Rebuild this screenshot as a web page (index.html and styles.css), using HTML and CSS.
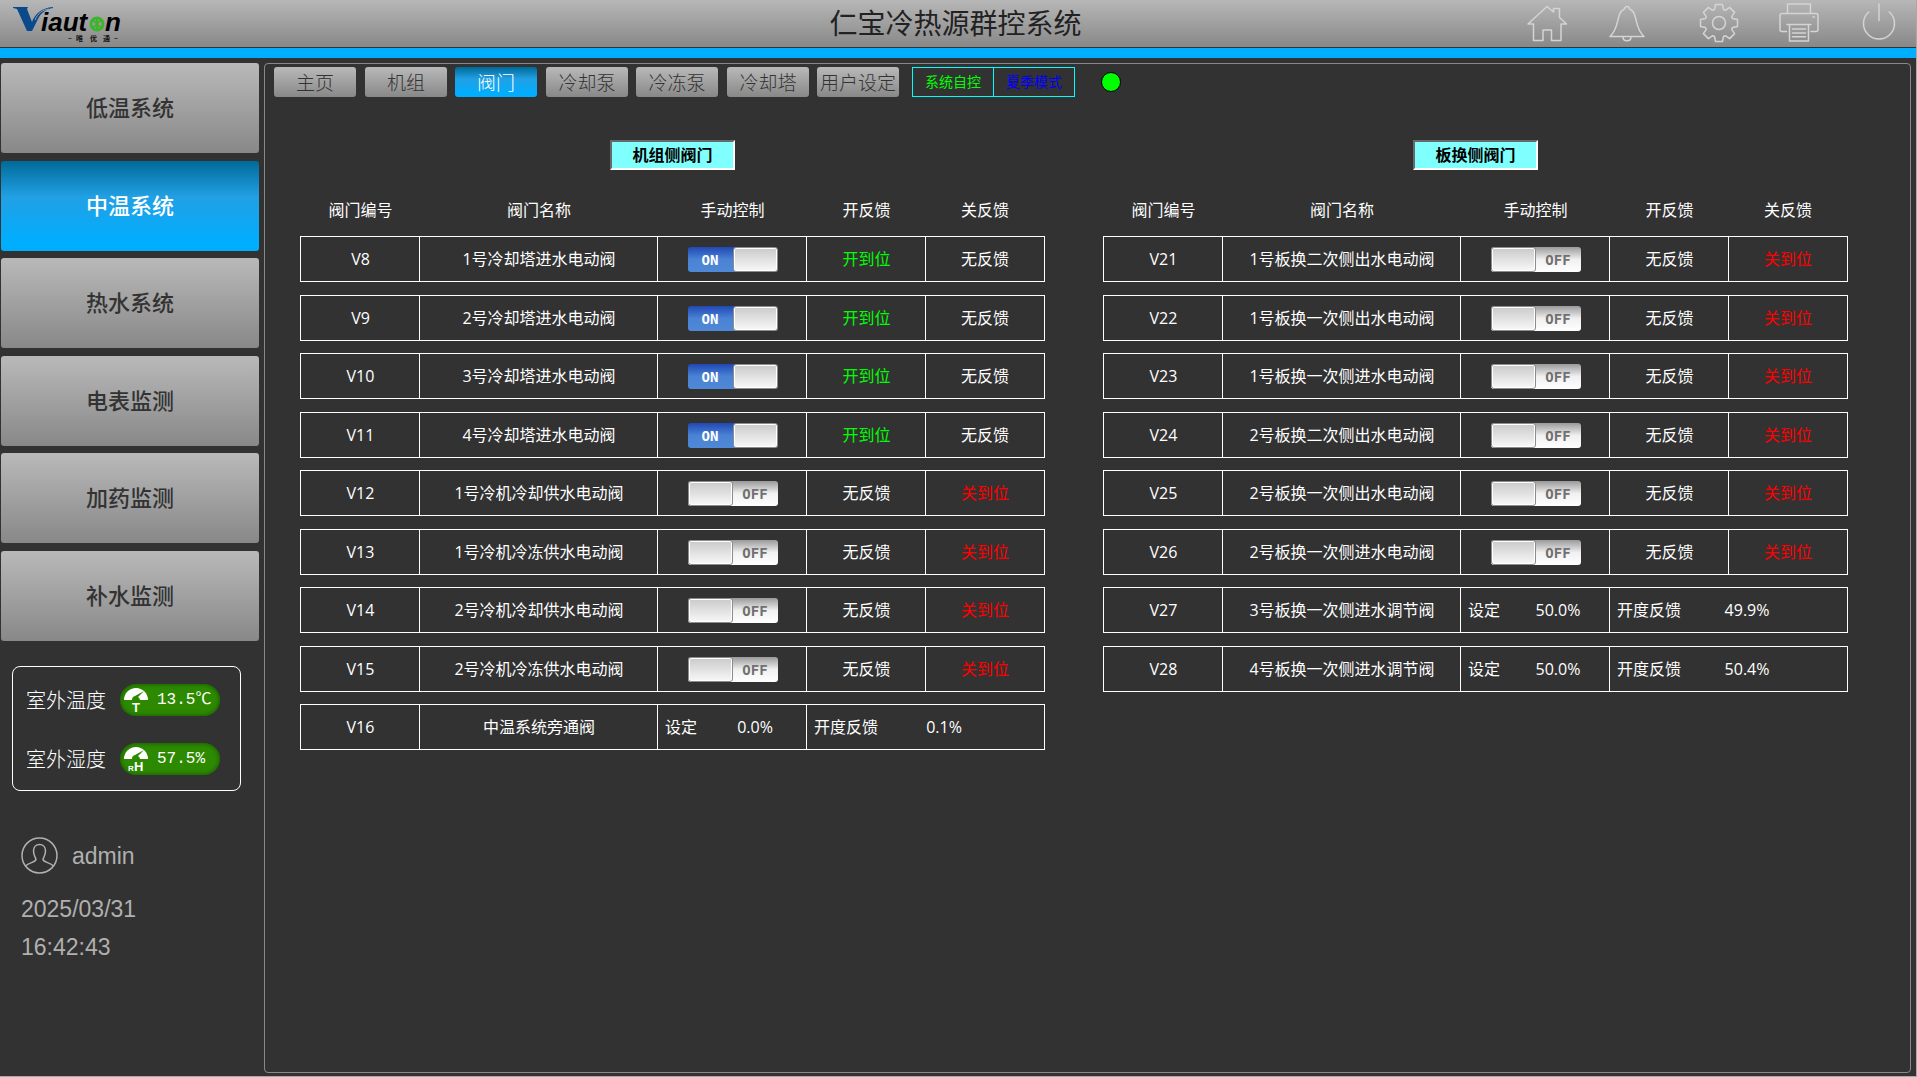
FILE: index.html
```html
<!DOCTYPE html>
<html lang="zh-CN">
<head>
<meta charset="utf-8">
<meta name="viewport" content="width=device-width, initial-scale=1">
<title>仁宝冷热源群控系统</title>
<link rel="stylesheet" href="styles.css">
</head>
<body>
<header class="topbar">
  <svg class="logo" width="112" height="44" viewBox="0 0 112 44" role="img" aria-label="Viauton">
    <path class="logo-blue" d="M1 7H16L15 9L20 22C23 14 29 8 41 7V8C34 9 28 14 26 19L20 31H15L5 9L1 8Z"/>
    <path class="logo-swoosh" d="M23 20C26 13 30 10 37 9"/>
    <text class="logo-word" x="29" y="31">iaut</text>
    <text class="logo-word" x="93" y="31">n</text>
    <circle class="logo-ring" cx="85" cy="24" r="6"/>
    <path class="logo-leaf" d="M81 20L89 28M89 20L81 28M85 18V30"/>
    <text class="logo-sub" x="56 64 78 91 102" y="41">–唯优通–</text>
  </svg>
  <h1 class="title">仁宝冷热源群控系统</h1>
  <nav class="tools" aria-label="工具">
    <button class="tool" type="button" aria-label="首页"><svg viewBox="0 0 40 40"><path d="M1 21L20 3.5L26.500 9V5.500H32.500V14.500L39.500 21H34V37.500H24.500V27H16V37.500H6.500V21Z"/></svg></button>
    <button class="tool" type="button" aria-label="报警"><svg viewBox="0 0 40 40"><path d="M3 33.500H37C30 27 30 19 28 13C27 9 25 7 22.500 6C22 2.500 18 2.500 17.500 6C15 7 13 9 12 13C10 19 10 27 3 33.500ZM16 34C16 39 24 39 24 34"/></svg></button>
    <button class="tool tool-gear" type="button" aria-label="设置"><svg viewBox="-20 -20 40 40"><path d="M-3.500-18.500H3.500L4.500-13.500L6.400-12.700L10.600-15.600L15.600-10.600L12.700-6.400L13.500-4.500L18.500-3.500V3.500L13.500 4.500L12.700 6.400L15.600 10.600L10.600 15.600L6.400 12.700L4.500 13.500L3.500 18.500H-3.500L-4.500 13.500L-6.400 12.700L-10.600 15.600L-15.600 10.600L-12.700 6.400L-13.500 4.500L-18.500 3.500V-3.500L-13.500-4.500L-12.700-6.400L-15.600-10.600L-10.600-15.600L-6.400-12.700L-4.500-13.500Z"/><circle r="6.500"/></svg></button>
    <button class="tool" type="button" aria-label="打印"><svg viewBox="0 0 40 40"><path d="M8.500 10.500V1H31.500V10.500M7.500 28.500H3Q1 28.500 1 26.500V12.500Q1 10.500 3 10.500H37Q39 10.500 39 12.500V26.500Q39 28.500 37 28.500H32M8 21.500H32M10.500 21.500V38H29.500V21.500M13.500 26H26.500M13.500 30H26.500M13.500 33.700H26.500M34 14H35.500"/></svg></button>
    <button class="tool" type="button" aria-label="退出"><svg viewBox="0 0 40 40"><path d="M20 1V17.500M9.700 9A15.500 15.500 0 1 0 30.300 9"/></svg></button>
  </nav>
</header>

<div class="layout">
  <aside class="sidebar">
    <nav class="systems" aria-label="系统">
      <button class="system" type="button">低温系统</button>
      <button class="system active" type="button">中温系统</button>
      <button class="system" type="button">热水系统</button>
      <button class="system" type="button">电表监测</button>
      <button class="system" type="button">加药监测</button>
      <button class="system" type="button">补水监测</button>
    </nav>
    <section class="weather">
      <div class="reading"><span>室外温度</span>
        <span class="pill"><svg width="26" height="32" viewBox="0 0 26 32"><path class="dome" d="M1 16A12 12 0 0 1 25 16H17A4 4 0 0 0 15 13L21 7L12 12A4 4 0 0 0 9 16Z"/><text class="unit" x="13" y="28" text-anchor="middle">T</text></svg><span>13.5℃</span></span>
      </div>
      <div class="reading"><span>室外湿度</span>
        <span class="pill"><svg width="26" height="32" viewBox="0 0 26 32"><path class="dome" d="M1 16A12 12 0 0 1 25 16H17A4 4 0 0 0 15 13L21 7L12 12A4 4 0 0 0 9 16Z"/><text class="unit-small" x="5" y="28">R</text><text class="unit" x="11" y="28">H</text></svg><span>57.5%</span></span>
      </div>
    </section>
    <section class="session">
      <div class="user"><svg width="37" height="37" viewBox="0 0 37 37" aria-hidden="true"><circle cx="18.500" cy="18.500" r="17.500"/><path d="M4.500 29C8 25 14 26 15 22.500C15 21 12.500 19 12.500 14C12.500 10 15 7.500 18.500 7.500C22 7.500 24.500 10 24.500 14C24.500 19 22 21 22 22.500C23 26 29 25 32.500 29"/></svg><span>admin</span></div>
      <div class="clock"><time>2025/03/31</time><time>16:42:43</time></div>
    </section>
  </aside>

  <main class="panel">
    <div class="toolbar">
      <nav class="tabs" aria-label="页面">
        <button class="tab" type="button">主页</button>
        <button class="tab" type="button">机组</button>
        <button class="tab active" type="button">阀门</button>
        <button class="tab" type="button">冷却泵</button>
        <button class="tab" type="button">冷冻泵</button>
        <button class="tab" type="button">冷却塔</button>
        <button class="tab" type="button">用户设定</button>
      </nav>
      <div class="modes"><span class="mode auto">系统自控</span><span class="mode season">夏季模式</span></div>
      <span class="lamp" role="img" aria-label="运行"></span>
    </div>

    <div class="groups">
      <section class="group">
        <h2 class="caption">机组侧阀门</h2>
        <table class="valves">
          <thead><tr><th>阀门编号</th><th>阀门名称</th><th>手动控制</th><th>开反馈</th><th>关反馈</th></tr></thead>
          <tbody>
            <tr><td>V8</td><td>1号冷却塔进水电动阀</td><td><label class="switch"><input type="checkbox" checked><span>ON</span></label></td><td class="opened">开到位</td><td>无反馈</td></tr>
            <tr><td>V9</td><td>2号冷却塔进水电动阀</td><td><label class="switch"><input type="checkbox" checked><span>ON</span></label></td><td class="opened">开到位</td><td>无反馈</td></tr>
            <tr><td>V10</td><td>3号冷却塔进水电动阀</td><td><label class="switch"><input type="checkbox" checked><span>ON</span></label></td><td class="opened">开到位</td><td>无反馈</td></tr>
            <tr><td>V11</td><td>4号冷却塔进水电动阀</td><td><label class="switch"><input type="checkbox" checked><span>ON</span></label></td><td class="opened">开到位</td><td>无反馈</td></tr>
            <tr><td>V12</td><td>1号冷机冷却供水电动阀</td><td><label class="switch"><input type="checkbox"><span>OFF</span></label></td><td>无反馈</td><td class="closed">关到位</td></tr>
            <tr><td>V13</td><td>1号冷机冷冻供水电动阀</td><td><label class="switch"><input type="checkbox"><span>OFF</span></label></td><td>无反馈</td><td class="closed">关到位</td></tr>
            <tr><td>V14</td><td>2号冷机冷却供水电动阀</td><td><label class="switch"><input type="checkbox"><span>OFF</span></label></td><td>无反馈</td><td class="closed">关到位</td></tr>
            <tr><td>V15</td><td>2号冷机冷冻供水电动阀</td><td><label class="switch"><input type="checkbox"><span>OFF</span></label></td><td>无反馈</td><td class="closed">关到位</td></tr>
            <tr><td>V16</td><td>中温系统旁通阀</td><td class="setting"><label for="set-v16">设定</label><input id="set-v16" type="text" value="0.0%"></td><td class="opening" colspan="2"><span>开度反馈</span><output>0.1%</output></td></tr>
          </tbody>
        </table>
      </section>

      <section class="group">
        <h2 class="caption">板换侧阀门</h2>
        <table class="valves">
          <thead><tr><th>阀门编号</th><th>阀门名称</th><th>手动控制</th><th>开反馈</th><th>关反馈</th></tr></thead>
          <tbody>
            <tr><td>V21</td><td>1号板换二次侧出水电动阀</td><td><label class="switch"><input type="checkbox"><span>OFF</span></label></td><td>无反馈</td><td class="closed">关到位</td></tr>
            <tr><td>V22</td><td>1号板换一次侧出水电动阀</td><td><label class="switch"><input type="checkbox"><span>OFF</span></label></td><td>无反馈</td><td class="closed">关到位</td></tr>
            <tr><td>V23</td><td>1号板换一次侧进水电动阀</td><td><label class="switch"><input type="checkbox"><span>OFF</span></label></td><td>无反馈</td><td class="closed">关到位</td></tr>
            <tr><td>V24</td><td>2号板换二次侧出水电动阀</td><td><label class="switch"><input type="checkbox"><span>OFF</span></label></td><td>无反馈</td><td class="closed">关到位</td></tr>
            <tr><td>V25</td><td>2号板换一次侧出水电动阀</td><td><label class="switch"><input type="checkbox"><span>OFF</span></label></td><td>无反馈</td><td class="closed">关到位</td></tr>
            <tr><td>V26</td><td>2号板换一次侧进水电动阀</td><td><label class="switch"><input type="checkbox"><span>OFF</span></label></td><td>无反馈</td><td class="closed">关到位</td></tr>
            <tr><td>V27</td><td>3号板换一次侧进水调节阀</td><td class="setting"><label for="set-v27">设定</label><input id="set-v27" type="text" value="50.0%"></td><td class="opening" colspan="2"><span>开度反馈</span><output>49.9%</output></td></tr>
            <tr><td>V28</td><td>4号板换一次侧进水调节阀</td><td class="setting"><label for="set-v28">设定</label><input id="set-v28" type="text" value="50.0%"></td><td class="opening" colspan="2"><span>开度反馈</span><output>50.4%</output></td></tr>
          </tbody>
        </table>
      </section>
    </div>
  </main>
</div>
</body>
</html>
```
FILE: styles.css
```css
* { box-sizing: border-box; }

body {
  display: flex;
  flex-direction: column;
  min-height: 100vh;
  margin: 0;
  border-right: 1px solid #a8a8a8;
  border-bottom: 1px solid #a8a8a8;
  background: #323232;
  color: #fff;
  font-family: "Open Sans", "Noto Sans CJK SC", sans-serif;
  font-size: 16px;
  line-height: 24px;
}

button { border: 0; padding: 0; cursor: pointer; }
h1, h2 { margin: 0; }

/* Top bar */
.topbar {
  display: grid;
  grid-template-columns: 1fr auto 1fr;
  align-items: start;
  height: 58px;
  padding: 0 17px 0 12px;
  background: linear-gradient(#b7b7b7, #888) 0 0 / 100% 47px no-repeat,
    linear-gradient(#00aeff, #00aeff) 0 100% / 100% 10px no-repeat;
}
.logo-blue { fill: #0b4a8a; }
.logo-swoosh { fill: none; stroke: #a0a4a8; stroke-width: 1; }
.logo-word { fill: #000; font: italic bold 26px "Liberation Sans", sans-serif; }
.logo-ring { fill: none; stroke: #3db42c; stroke-width: 3; }
.logo-leaf { fill: none; stroke: #3db42c; stroke-width: 2; }
.logo-sub { fill: #111; font: bold 7px "Noto Sans CJK SC", sans-serif; }
.title {
  color: #222;
  font-family: "Noto Sans CJK SC", sans-serif;
  font-size: 28px;
  font-weight: 400;
  line-height: 44px;
}
.tools { display: flex; justify-content: flex-end; gap: 40px; padding-top: 3px; }
.tool { width: 40px; height: 40px; background: none; }
.tool-gear { margin-left: 12px; }
.tool svg {
  display: block;
  overflow: visible;
  fill: none;
  stroke: #d4d4d4;
  stroke-width: 1.500;
  stroke-linejoin: round;
  stroke-linecap: round;
}

/* Page frame */
.layout { display: flex; flex: 1; gap: 5px; padding: 5px 5px 3px 1px; }
.sidebar { flex: 0 0 258px; }
.panel {
  flex: 1;
  min-width: 0;
  padding: 3px 0;
  border: 1px solid #888;
  border-radius: 4px;
}

/* Raised grey buttons, blue when selected */
.system, .tab {
  border-radius: 3px;
  background: linear-gradient(#b9b9b9, #888);
  color: #333;
  font-family: "Noto Sans CJK SC", sans-serif;
}
.system.active, .tab.active {
  background: linear-gradient(#006a98, #22a0e4 40%, #00aeff 90%);
  color: #fff;
}
.systems { display: flex; flex-direction: column; }
.system { height: 90px; padding-bottom: 4px; font-size: 22px; font-weight: 500; }
.system:nth-child(odd) { margin-bottom: 8px; }
.system:nth-child(even) { margin-bottom: 7px; }
.system:last-child { margin-bottom: 25px; }

/* Outdoor readings */
.weather {
  display: grid;
  gap: 27px;
  margin: 0 18px 46px 11px;
  padding: 17px 13px 15px;
  border: 1px solid #fff;
  border-radius: 8px;
}
.reading {
  display: flex;
  align-items: center;
  gap: 14px;
  height: 32px;
  font-family: "Noto Sans CJK SC", sans-serif;
  font-size: 20px;
  font-weight: 300;
}
.pill {
  display: flex;
  align-items: center;
  gap: 8px;
  width: 100px;
  height: 32px;
  padding-left: 3px;
  border-radius: 16px;
  background: #2d8a00;
  box-shadow: inset 0 0 5px #145000;
  font-family: "Liberation Mono", "Noto Sans CJK SC", monospace;
  font-size: 16px;
  font-weight: 400;
  line-height: 26px;
}
.dome { fill: #fff; }
.unit { fill: #fff; font: bold 13px "Liberation Sans", sans-serif; }
.unit-small { fill: #fff; font: bold 8px "Liberation Sans", sans-serif; }

/* Signed-in user and clock */
.session {
  padding-left: 20px;
  color: #b0b0b0;
  font-family: "Liberation Sans", sans-serif;
  font-size: 23px;
}
.user { display: flex; align-items: center; gap: 14px; margin-bottom: 16px; }
.user svg { fill: none; stroke: #b0b0b0; stroke-width: 1.500; }
.clock { display: grid; line-height: 38px; }

/* Tabs and plant mode */
.toolbar { display: flex; align-items: center; padding-left: 9px; }
.tabs { display: flex; }
.tab { width: 82px; height: 30px; padding-bottom: 2px; font-size: 19px; font-weight: 300; }
.tab:nth-child(odd) { margin-right: 9px; }
.tab:nth-child(even) { margin-right: 8px; }
.tab:last-child { margin-right: 13px; }
.modes { display: flex; border: 1px solid #00ffff; font-size: 14px; line-height: 28px; }
.mode { width: 80px; text-align: center; }
.mode + .mode { width: 81px; border-left: 1px solid #00ffff; }
.auto { color: #00ff00; }
.season { color: #0000ff; }
.lamp {
  width: 20px;
  height: 20px;
  margin-left: 26px;
  border: 1px solid #000;
  border-radius: 50%;
  background: #00ff00;
}

/* Valve tables */
.groups {
  display: grid;
  grid-template-columns: 1fr 1fr;
  gap: 58px;
  padding: 43px 62px 0 35px;
}
.caption {
  width: 125px;
  margin: 0 auto 20px;
  border: 2px solid;
  border-color: #696969 #fff #fff #696969;
  background: #80ffff;
  color: #000;
  font-size: 16px;
  font-weight: 700;
  line-height: 26px;
  text-align: center;
}
.valves, .valves thead, .valves tbody { display: block; }
.valves tr {
  display: grid;
  grid-template-columns: 119fr 238fr 149fr 119fr 118fr;
  height: 46px;
  margin-bottom: 12px;
  border: 1px solid #fff;
}
.valves tbody tr:nth-child(odd) { margin-bottom: 13px; }
.valves thead tr { height: 40px; margin-bottom: 6px; border-color: transparent; }
.valves th, .valves td {
  display: flex;
  align-items: center;
  justify-content: center;
  min-width: 0;
  padding: 0;
  font-weight: 400;
  white-space: nowrap;
}
.valves td + td { border-left: 1px solid #fff; margin-left: -1px; }
.valves .opened { color: #00ff00; }
.valves .closed { color: #ff0000; }
.valves .setting, .valves .opening { justify-content: flex-start; gap: 6px; padding-left: 7px; }
.valves .opening { grid-column: span 2; }
.setting input {
  flex: 1;
  min-width: 0;
  padding: 0;
  border: 0;
  background: none;
  color: inherit;
  font: inherit;
  text-align: center;
}
.opening output { width: 120px; text-align: center; }

/* Two-position switch: the checkbox is the sliding knob */
.switch {
  display: flex;
  width: 90px;
  height: 25px;
  border-radius: 3px;
  background: linear-gradient(#9a9a9a, #f0f0f0 50%, #fff);
  color: #707070;
  font-family: "DejaVu Sans Mono", monospace;
  font-size: 14px;
  font-weight: 700;
  line-height: 26px;
}
.switch input {
  appearance: none;
  width: 45px;
  height: 25px;
  margin: 0;
  border: 1px solid #8c8c8c;
  border-radius: 3px;
  background: linear-gradient(#cacaca, #f8f8f8);
  box-shadow: inset 0 0 0 1px #fff;
}
.switch span { flex: 1; text-align: center; }
.switch:has(input:checked) {
  flex-direction: row-reverse;
  background: linear-gradient(#2148b4, #4a83d4 50%, #4f88d6);
  color: #fff;
}
```
